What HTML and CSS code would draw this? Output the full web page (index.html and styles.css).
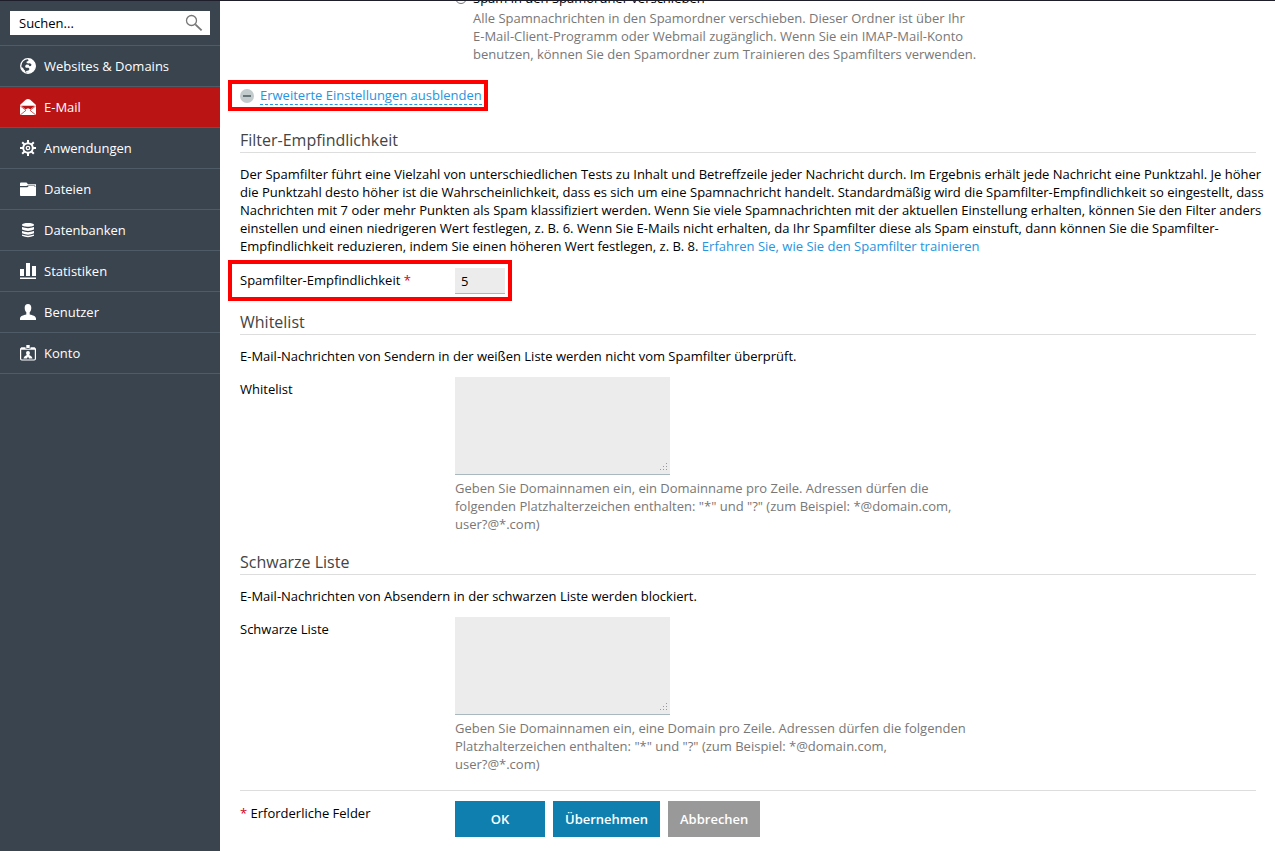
FILE: index.html
```html
<!DOCTYPE html>
<html lang="de">
<head>
    <meta charset="utf-8">
    <title>Spamfilter</title>
    <link rel="stylesheet" href="styles.css">
</head>
<body>
<aside class="sidebar">
    <form class="search">
        <input type="text" aria-label="Suchen" value="Suchen...">
        <button type="button" aria-label="Suche starten">
            <svg width="18" height="18" viewBox="0 0 18 18" fill="none" stroke="#777"><circle cx="6.500" cy="6.500" r="5" stroke-width="1.300"/><path d="M10.300 10.300L16.600 16.400" stroke-width="1.800"/></svg>
        </button>
    </form>
    <nav>
        <ul class="menu">
            <li><a href="#">
                <svg viewBox="0 0 16 16"><circle cx="8" cy="8" r="7.300" fill="none" stroke="#fff" stroke-width="1.300"/><path d="M6.500 3.800L8.500 2.800 8 1h3l4 4 .5 4-2.500 4.500-3 1.500-3.500-.3-.5-1.700 2.500-.5 1-1.500-1-1.200H5.800L5 8l1.500-1.500 2 .2L9.500 8.200l1.500-.2.5-1.500L10 5.200 8.500 5.600 6.700 5z"/><path d="M1 9.200l2 .6 1 2 1 .7.800 2.200-2.300-.9-2-2.200z"/></svg>
                Websites &amp; Domains</a></li>
            <li class="active"><a href="#">
                <svg viewBox="0 0 16 16"><path d="M0 6L5.700.8Q8-.8 10.300.8L16 6v8.500q0 1.500-1.500 1.500h-13Q0 16 0 14.500z"/><path d="M1.200 6.700h13.600L10.500 10.300 8 9.200 5.500 10.300z" fill="#bb1414"/><path d="M.3 7L6 11.300.8 15.500M15.700 7L10 11.300l5.200 4.200" fill="none" stroke="#bb1414" stroke-width=".7"/></svg>
                E-Mail</a></li>
            <li><a href="#">
                <svg viewBox="0 0 16 16" fill="none" stroke="#fff"><circle cx="8" cy="8" r="4.800" stroke-width="2"/><circle cx="8" cy="8" r="1.700" stroke-width="1.300"/><path d="M8 0v3M8 13v3M0 8h3M13 8h3M2.200 2.200l2.300 2.300M11.500 11.500l2.300 2.300M13.800 2.200l-2.300 2.300M4.500 11.500l-2.300 2.300" stroke-width="2"/></svg>
                Anwendungen</a></li>
            <li><a href="#">
                <svg viewBox="0 0 16 16"><path d="M0 5V2.500Q0 1.500 1 1.500h5.500L8 3.200h8v2.600h-.9V4.400H7.200L6.500 5z"/><path d="M0 6.200h7.300L8.800 5h5.800v1H16v8.200q0 .8-.8.800H.8Q0 15 0 14.200z"/></svg>
                Dateien</a></li>
            <li><a href="#">
                <svg viewBox="0 0 16 16"><path d="M2 3C2 .4 14 .4 14 3c0 2.300-12 2.300-12 0z"/><path d="M2 5q6 2.300 12 0v2.600q-6 2.800-12 0z"/><path d="M2 9q6 2.300 12 0v2.300q-6 2.800-12 0z"/><path d="M2 12.500q6 2.300 12 0v1.300q-6 2.800-12 0z"/></svg>
                Datenbanken</a></li>
            <li><a href="#">
                <svg viewBox="0 0 16 16"><path d="M0 6h4v7H0zM6 0h4v13H6zM12 3h4v10h-4zM0 14.500h16V16H0z"/></svg>
                Statistiken</a></li>
            <li><a href="#">
                <svg viewBox="0 0 16 16"><path d="M8 0c2.200 0 3.300 1.500 3.300 3.700 0 2-.7 3.600-1.600 4.500v2.300c2.800.7 6.300 1.500 6.300 4V16H0v-1.500c0-2.500 3.500-3.300 6.300-4V8.200C5.400 7.300 4.700 5.700 4.700 3.700 4.700 1.500 5.800 0 8 0z"/></svg>
                Benutzer</a></li>
            <li><a href="#">
                <svg viewBox="0 0 16 16"><rect x=".6" y="3" width="14.800" height="12" rx="1.200" fill="none" stroke="#fff" stroke-width="1.200"/><path d="M1 2.500h14v2.300H1zM6.300 0h3.400v2.500H6.300z"/><path d="M5 2.700q3 2 6 0" fill="none" stroke="#39444f" stroke-width=".8"/><path d="M8 6c1.400 0 1.900.9 1.900 2 0 .9-.3 1.500-.8 2 1.400.6 2.900 1.300 3.400 3.500H9L8 11.600l-1 1.900H3.500c.5-2.200 2-2.900 3.400-3.500-.5-.5-.8-1.100-.8-2 0-1.100.5-2 1.900-2z"/></svg>
                Konto</a></li>
        </ul>
    </nav>
</aside>
<main>
    <form class="content">
        <div class="field action">
            <div class="option">
                <input type="radio" name="aktion" id="verschieben">
                <label for="verschieben">Spam in den Spamordner verschieben</label>
                <p class="hint">Alle Spamnachrichten in den Spamordner verschieben. Dieser Ordner ist über Ihr<br>
                    E-Mail-Client-Programm oder Webmail zugänglich. Wenn Sie ein IMAP-Mail-Konto<br>
                    benutzen, können Sie den Spamordner zum Trainieren des Spamfilters verwenden.</p>
            </div>
        </div>

        <div class="marked toggle">
            <svg width="14" height="14" viewBox="0 0 14 14"><circle cx="7" cy="7" r="7" fill="#c3cbcd"/><path d="M3 6h8v2H3z" fill="#67757b"/></svg>
            <a href="#">Erweiterte Einstellungen ausblenden</a>
        </div>

        <section>
            <h2>Filter-Empfindlichkeit</h2>
            <p class="intro">Der Spamfilter führt eine Vielzahl von unterschiedlichen Tests zu Inhalt und Betreffzeile jeder Nachricht durch. Im Ergebnis erhält jede Nachricht eine Punktzahl. Je höher<br>
                die Punktzahl desto höher ist die Wahrscheinlichkeit, dass es sich um eine Spamnachricht handelt. Standardmäßig wird die Spamfilter-Empfindlichkeit so eingestellt, dass<br>
                Nachrichten mit 7 oder mehr Punkten als Spam klassifiziert werden. Wenn Sie viele Spamnachrichten mit der aktuellen Einstellung erhalten, können Sie den Filter anders<br>
                einstellen und einen niedrigeren Wert festlegen, z. B. 6. Wenn Sie E-Mails nicht erhalten, da Ihr Spamfilter diese als Spam einstuft, dann können Sie die Spamfilter-<br>
                Empfindlichkeit reduzieren, indem Sie einen höheren Wert festlegen, z. B. 8. <a href="#">Erfahren Sie, wie Sie den Spamfilter trainieren</a></p>
            <div class="marked score">
                <label for="punkte">Spamfilter-Empfindlichkeit <span class="required">*</span></label>
                <input type="text" id="punkte" value="5">
            </div>
        </section>

        <section>
            <h2>Whitelist</h2>
            <p>E-Mail-Nachrichten von Sendern in der weißen Liste werden nicht vom Spamfilter überprüft.</p>
            <div class="field">
                <label for="whitelist">Whitelist</label>
                <div>
                    <textarea id="whitelist"></textarea>
                    <p class="hint">Geben Sie Domainnamen ein, ein Domainname pro Zeile. Adressen dürfen die<br>
                        folgenden Platzhalterzeichen enthalten: "*" und "?" (zum Beispiel: *@domain.com,<br>
                        user?@*.com)</p>
                </div>
            </div>
        </section>

        <section>
            <h2>Schwarze Liste</h2>
            <p>E-Mail-Nachrichten von Absendern in der schwarzen Liste werden blockiert.</p>
            <div class="field">
                <label for="blacklist">Schwarze Liste</label>
                <div>
                    <textarea id="blacklist"></textarea>
                    <p class="hint">Geben Sie Domainnamen ein, eine Domain pro Zeile. Adressen dürfen die folgenden<br>
                        Platzhalterzeichen enthalten: "*" und "?" (zum Beispiel: *@domain.com,<br>
                        user?@*.com)</p>
                </div>
            </div>
        </section>

        <div class="footer">
            <span class="legend"><span class="required">*</span> Erforderliche Felder</span>
            <div class="buttons">
                <button type="button">OK</button>
                <button type="button">Übernehmen</button>
                <button type="button" class="cancel">Abbrechen</button>
            </div>
        </div>
    </form>
</main>
</body>
</html>
```
FILE: styles.css
```css
*{
    box-sizing: border-box;
}
body{
    display: flex;
    min-height: 100vh;
    margin: 0;
    border-top: 1px solid #1d1e29;
    background-color: white;
    color: black;
    font-family: "Open Sans", "Noto Sans", sans-serif;
    font-size: 13px;
    line-height: 18px;
}
input, textarea, button{
    font: inherit;
    color: inherit;
}
a{
    color: #2694e0;
    text-decoration: none;
}
p{
    margin: 0;
}

/* Sidebar */
.sidebar{
    flex: none;
    width: 220px;
    background-color: #39444f;
}
.search{
    display: flex;
    align-items: center;
    height: 24px;
    margin: 10px;
    background-color: white;
}
.search input{
    flex: 1;
    min-width: 0;
    padding: 0 0 0 9px;
    border: none;
    outline: none;
    background: none;
}
.search button{
    display: flex;
    padding: 0 7px;
    border: none;
    background: none;
    cursor: pointer;
}
.menu{
    margin: 0;
    padding: 0;
    list-style: none;
    border-top: 1px solid #4e5c67;
}
.menu li{
    border-bottom: 1px solid #4e5c67;
}
.menu a{
    display: flex;
    align-items: center;
    gap: 8px;
    height: 40px;
    padding-left: 20px;
    color: white;
}
.menu a:hover{
    background-color: #44515d;
}
.menu .active a{
    background-color: #bb1414;
}
.menu svg{
    width: 16px;
    height: 16px;
    fill: white;
}
.menu svg[fill="none"]{
    fill: none;
}

/* Content */
main{
    flex: 1;
    min-width: 0;
    overflow: hidden;
    padding: 0 19px 12px 20px;
}
.content{
    margin-top: -12px;
}
.field{
    display: grid;
    grid-template-columns: 215px minmax(0, 515px);
    margin-top: 12px;
}
.action{
    margin-top: 0;
}
.option{
    display: grid;
    grid-column: 2;
    grid-template-columns: 18px 1fr;
    row-gap: 2px;
}
.option input{
    width: 12px;
    height: 12px;
    margin: 3px 0 0;
}
.option .hint{
    grid-column: 2;
    margin: 0;
}
.hint{
    margin-top: 4px;
    color: #777;
}
.hint, .intro{
    white-space: nowrap;
}
.marked{
    display: flex;
    width: fit-content;
    margin-left: -12px;
    border: 4px solid red;
}
.toggle{
    align-items: center;
    gap: 6px;
    height: 31px;
    margin-top: 17px;
    padding: 0 2px 0 8px;
}
.toggle a{
    border-bottom: 1px dashed #2694e0;
}
section{
    margin-top: 18px;
}
h2{
    margin: 0 0 12px;
    padding-bottom: 1px;
    border-bottom: 1px solid #ddd;
    color: #444;
    font-size: 16px;
    font-weight: normal;
    line-height: 22px;
}
.score{
    margin-top: 5px;
    margin-bottom: -8px;
    padding: 4px 3px 3px 8px;
}
.score label{
    width: 215px;
    padding-top: 3px;
}
.score input{
    width: 50px;
    height: 26px;
    padding: 0 6px;
    border: none;
    border-bottom: 1px solid #a9b8bf;
    background-color: #ececec;
}
.required{
    color: #d0021b;
}
.field label{
    padding-top: 3px;
}
.option label{
    padding-top: 0;
}
textarea{
    display: block;
    width: 215px;
    height: 98px;
    padding: 4px 6px;
    border: none;
    border-bottom: 1px solid #a9b8bf;
    background-color: #ececec;
}
textarea::-webkit-resizer{
    background: url("data:image/svg+xml,%3Csvg xmlns='http://www.w3.org/2000/svg' width='12' height='12' fill='%23999'%3E%3Cpath d='M8 1h1v1H8zM8 4h1v1H8zM5 4h1v1H5zM8 7h1v1H8zM5 7h1v1H5zM2 7h1v1H2z'/%3E%3C/svg%3E") no-repeat right bottom;
}
.footer{
    display: flex;
    margin-top: 17px;
    padding-top: 10px;
    border-top: 1px solid #ddd;
}
.legend{
    width: 215px;
    padding-top: 3px;
}
.buttons{
    display: flex;
    gap: 8px;
}
.buttons button{
    min-width: 90px;
    height: 36px;
    padding: 0 12px;
    border: none;
    background-color: #0f7fb0;
    color: white;
    font-weight: 600;
    cursor: pointer;
}
.buttons .cancel{
    background-color: #999;
}
.buttons button:hover{
    opacity: 0.9;
}
```
